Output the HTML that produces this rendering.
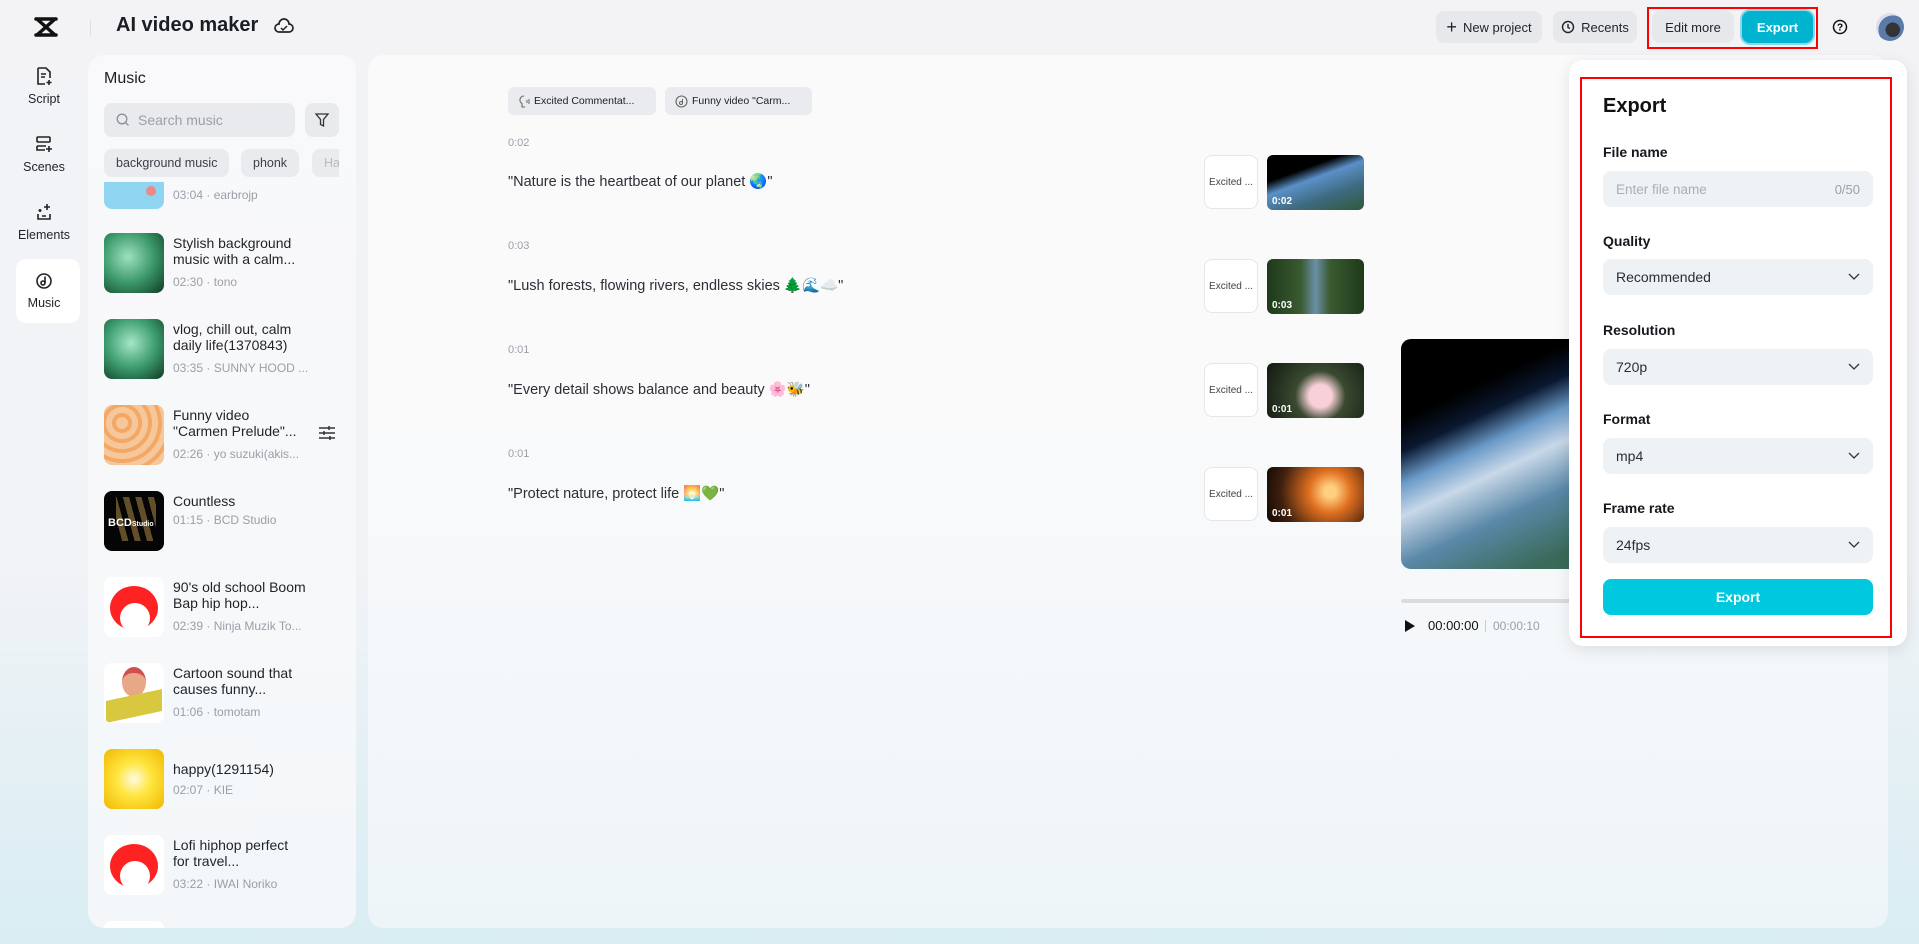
<!DOCTYPE html>
<html><head><meta charset="utf-8"><style>
*{box-sizing:border-box;margin:0;padding:0}
body{width:1919px;height:944px;overflow:hidden;position:relative;font-family:"Liberation Sans","Noto Sans CJK JP",sans-serif;color:#1a1d23;background:linear-gradient(180deg,#f3f3f6 0%,#f1f3f6 60%,#d8edf3 100%)}
.abs{position:absolute}
.btn{position:absolute;top:11px;height:32px;border-radius:8px;background:#e6e8ec;font-size:13px;display:flex;align-items:center;justify-content:center;gap:6px;color:#1f2329}
.panel{position:absolute;border-radius:16px}
.nav{position:absolute;left:0;width:88px;text-align:center;font-size:12.5px;color:#1f2329}
.nav svg{display:block;margin:0 auto 6px}
.item{position:absolute;left:104px;height:60px;width:240px}
.item .th{position:absolute;left:0;top:0;width:60px;height:60px;border-radius:8px;overflow:hidden}
.item .t{position:absolute;left:69px;top:2px;font-size:14px;line-height:16px;color:#1f2329;width:134px}
.item .s{position:absolute;left:69px;font-size:12px;color:#9a9fa8;white-space:nowrap}
.tag{position:absolute;top:149px;height:28px;border-radius:8px;background:#e9ebef;font-size:12.5px;color:#3a3f47;display:flex;align-items:center;padding:0 12px}
.time{position:absolute;left:508px;font-size:11px;color:#9a9fa8}
.sent{position:absolute;left:508px;font-size:14.5px;color:#2b2f36}
.exc{position:absolute;left:1204px;width:54px;height:54px;border:1px solid #e4e6ea;border-radius:8px;background:#fff;font-size:10px;color:#444;display:flex;align-items:center;justify-content:center}
.vt{position:absolute;left:1267px;width:97px;height:55px;border-radius:6px;overflow:hidden;background:#000}
.vt span{position:absolute;left:5px;bottom:3px;color:#fff;font-size:10px;font-weight:bold}
.lbl{position:absolute;left:1603px;font-size:14px;font-weight:bold;color:#16181d}
.sel{position:absolute;left:1603px;width:270px;height:36px;border-radius:8px;background:#eff2f5;font-size:14px;color:#2a2e35;display:flex;align-items:center;padding:0 13px;justify-content:space-between}
</style></head><body>
<svg class="abs" style="left:34px;top:16px" width="24" height="22" viewBox="0 0 24 22"><path d="M2 3h20M2 19h20M3 3l18 16M21 3L3 19" fill="none" stroke="#111" stroke-width="3.5" stroke-linecap="round"/></svg>
<div class="abs" style="left:90px;top:20px;width:1px;height:16px;background:#ddd"></div>
<div class="abs" style="left:116px;top:14px;font-size:20px;font-weight:bold">AI video maker</div>
<svg class="abs" style="left:273px;top:15px" width="22" height="22" viewBox="0 0 22 22"><path d="M6 17a4 4 0 0 1 0-8 5 5 0 0 1 10 0 4 4 0 0 1 0 8z" fill="none" stroke="#222" stroke-width="1.7"/><path d="M8 13l2 2 4-4" fill="none" stroke="#222" stroke-width="1.5"/></svg>
<div class="btn" style="left:1436px;width:106px"><span style="font-size:18px">+</span>New project</div>
<div class="btn" style="left:1553px;width:84px"><svg width="14" height="14" viewBox="0 0 14 14"><circle cx="7" cy="7" r="5.5" fill="none" stroke="#222" stroke-width="1.4"/><path d="M7 4v3.5l2 1" fill="none" stroke="#222" stroke-width="1.4"/></svg>Recents</div>
<div class="abs" style="left:1647px;top:7px;width:171px;height:42px;border:2px solid #f00"></div>
<div class="btn" style="left:1652px;width:82px">Edit more</div>
<div class="btn" style="left:1742px;width:71px;background:#00b4d0;color:#fff;font-weight:bold;box-shadow:0 0 0 2px #8fd6ea">Export</div>
<svg class="abs" style="left:1832px;top:19px" width="16" height="16" viewBox="0 0 16 16"><circle cx="8" cy="8" r="6.5" fill="none" stroke="#111" stroke-width="1.5"/><text x="8" y="11.5" font-size="10" font-weight="bold" text-anchor="middle" font-family="Liberation Sans">?</text></svg>
<div class="abs" style="left:1876px;top:13px;width:28px;height:28px;border-radius:50%;background:radial-gradient(circle at 60% 60%,#333 0 30%,#5a7aa8 31% 60%,#dde 61%)"></div>
<div class="nav" style="top:66px"><svg width="18" height="20" viewBox="0 0 18 20"><path d="M3 2h8l4 4v6M3 2v16h7" fill="none" stroke="#222" stroke-width="1.6"/><path d="M6 8h5M6 11h4M14 14v5M11.5 16.5h5" stroke="#222" stroke-width="1.6"/></svg>Script</div>
<div class="nav" style="top:134px"><svg width="18" height="20" viewBox="0 0 18 20"><rect x="2" y="3" width="13" height="5" rx="1" fill="none" stroke="#222" stroke-width="1.6"/><path d="M2 12h9M2 12v4h8M14 12v6M11 15h6" fill="none" stroke="#222" stroke-width="1.6"/></svg>Scenes</div>
<div class="nav" style="top:202px"><svg width="18" height="20" viewBox="0 0 18 20"><path d="M3 12v5h12v-5M7 14h4M12 2v6M9 5h6M5 7v3M3.5 8.5h3" fill="none" stroke="#222" stroke-width="1.6"/></svg>Elements</div>
<div class="abs" style="left:16px;top:259px;width:64px;height:64px;border-radius:10px;background:#fff"></div>
<div class="nav" style="top:270px"><svg width="18" height="20" viewBox="0 0 18 20"><circle cx="9" cy="11" r="7" fill="none" stroke="#222" stroke-width="1.6"/><circle cx="8" cy="13" r="2" fill="none" stroke="#222" stroke-width="1.6"/><path d="M10 13V6.5" stroke="#222" stroke-width="1.6"/></svg>Music</div>
<div class="panel" style="left:88px;top:55px;width:268px;height:873px;background:linear-gradient(180deg,#f9f9fb,#f4f7f9);overflow:hidden"></div>
<div class="abs" style="left:104px;top:70px;font-size:16px;font-weight:500">Music</div>
<div class="abs" style="left:104px;top:103px;width:191px;height:34px;border-radius:8px;background:#e8eaee;font-size:14px;color:#9aa0a8;display:flex;align-items:center;padding-left:12px;gap:8px"><svg width="14" height="14" viewBox="0 0 14 14"><circle cx="6" cy="6" r="4.8" fill="none" stroke="#8a9099" stroke-width="1.3"/><path d="M9.5 9.5l3 3" stroke="#8a9099" stroke-width="1.3"/></svg>Search music</div>
<div class="abs" style="left:305px;top:103px;width:34px;height:34px;border-radius:8px;background:#e8eaee"><svg style="margin:9px" width="16" height="16" viewBox="0 0 16 16"><path d="M2 2h12l-4.5 5.5V14l-3-1.5V7.5z" fill="none" stroke="#333" stroke-width="1.3"/></svg></div>
<div class="tag" style="left:104px">background music</div>
<div class="tag" style="left:241px">phonk</div>
<div class="abs" style="left:312px;top:149px;width:27px;height:28px;overflow:hidden"><div class="tag" style="left:0;top:0;color:#bbb">Ha</div></div>
<div class="abs" style="left:88px;top:182px;width:268px;height:746px;overflow:hidden;border-radius:0 0 16px 16px">
 <div class="abs" style="left:16px;top:-33px;width:60px;height:60px;border-radius:8px;background:#8fd4f0"></div>
 <div class="abs" style="left:58px;top:4px;width:10px;height:10px;border-radius:50%;background:#e88"></div>
 <div class="abs" style="left:85px;top:6px;font-size:12px;color:#9a9fa8">03:04 · earbrojp</div>
</div>
<div class="item" style="top:233px"><div class="th" style="background:radial-gradient(circle at 40% 40%,#9fe0c0,#3c9a6a 50%,#0f3a25)"></div><div class="t">Stylish background music with a calm...</div><div class="s" style="top:42px">02:30 · tono</div></div>
<div class="item" style="top:319px"><div class="th" style="background:radial-gradient(circle at 45% 40%,#a6e6c8,#3e9e70 50%,#0f3a25)"></div><div class="t">vlog, chill out, calm daily life(1370843)</div><div class="s" style="top:42px">03:35 · SUNNY HOOD ...</div></div>
<div class="item" style="top:405px"><div class="th" style="background:repeating-radial-gradient(circle at 30% 30%,#f6c79a 0 6px,#f3a866 6px 10px)"></div><div class="t">Funny video "Carmen Prelude"...</div><div class="s" style="top:42px">02:26 · yo suzuki(akis...</div><svg style="position:absolute;left:214px;top:20px" width="18" height="16" viewBox="0 0 18 16"><path d="M1 3h16M1 8h16M1 13h16" stroke="#333" stroke-width="1.5"/><path d="M11 1v4M6 6v4M12 11v4" stroke="#333" stroke-width="1.5"/></svg></div>
<div class="item" style="top:491px"><div class="th" style="background:#050505"><div style="position:absolute;left:12px;top:6px;width:40px;height:44px;background:repeating-linear-gradient(75deg,transparent 0 6px,#7a6030 6px 12px);opacity:.8"></div><div style="position:absolute;left:4px;top:26px;color:#fff;font-size:11px;font-weight:bold">BCD<span style="font-size:7px">Studio</span></div></div><div class="t">Countless</div><div class="s" style="top:22px">01:15 · BCD Studio</div></div>
<div class="item" style="top:577px"><div class="th" style="background:#fff"><div style="position:absolute;left:6px;top:9px;width:48px;height:44px;border-radius:50%;background:#f22"></div><div style="position:absolute;left:16px;top:26px;width:30px;height:30px;border-radius:50%;background:#fff"></div></div><div class="t">90's old school Boom Bap hip hop...</div><div class="s" style="top:42px">02:39 · Ninja Muzik To...</div></div>
<div class="item" style="top:663px"><div class="th" style="background:#fff"><div style="position:absolute;left:18px;top:4px;width:24px;height:30px;border-radius:50%;background:#e8a888;border-top:6px solid #d05050"></div><div style="position:absolute;left:2px;top:32px;width:56px;height:22px;background:#d8c840;transform:skewY(-12deg)"></div></div><div class="t">Cartoon sound that causes funny...</div><div class="s" style="top:42px">01:06 · tomotam</div></div>
<div class="item" style="top:749px"><div class="th" style="background:radial-gradient(circle,#fffbe0 0,#ffe640 40%,#f0b800 100%)"></div><div class="t" style="top:12px">happy(1291154)</div><div class="s" style="top:34px">02:07 · KIE</div></div>
<div class="item" style="top:835px"><div class="th" style="background:#fff"><div style="position:absolute;left:6px;top:9px;width:48px;height:44px;border-radius:50%;background:#f22"></div><div style="position:absolute;left:16px;top:26px;width:30px;height:30px;border-radius:50%;background:#fff"></div></div><div class="t">Lofi hiphop perfect for travel...</div><div class="s" style="top:42px">03:22 · IWAI Noriko</div></div>
<div class="abs" style="left:104px;top:921px;width:60px;height:7px;background:#fff;border-radius:8px 8px 0 0"></div>
<div class="panel" style="left:368px;top:55px;width:1520px;height:873px;background:linear-gradient(180deg,#fafafb 40%,#eef5f8 100%)"></div>
<div class="abs" style="left:508px;top:87px;width:148px;height:28px;border-radius:6px;background:#e9ebef;font-size:10.5px;font-weight:500;display:flex;align-items:center;padding-left:10px;gap:4px"><svg width="12" height="13" viewBox="0 0 12 13"><path d="M6 1a4 4 0 0 0-2 7.5V12h3" fill="none" stroke="#666" stroke-width="1.1"/><path d="M9 5v3M11 4v5" stroke="#666"/></svg>Excited Commentat...</div>
<div class="abs" style="left:665px;top:87px;width:147px;height:28px;border-radius:6px;background:#e9ebef;font-size:10.5px;font-weight:500;display:flex;align-items:center;padding-left:10px;gap:4px"><svg width="13" height="13" viewBox="0 0 13 13"><circle cx="6.5" cy="6.5" r="5.5" fill="none" stroke="#666" stroke-width="1.1"/><circle cx="6" cy="8" r="1.5" fill="none" stroke="#666"/><path d="M7.5 8V4" stroke="#666"/></svg>Funny video "Carm...</div>
<div class="time" style="top:137px">0:02</div><div class="sent" style="top:173px">"Nature is the heartbeat of our planet 🌏"</div>
<div class="time" style="top:240px">0:03</div><div class="sent" style="top:277px">"Lush forests, flowing rivers, endless skies 🌲🌊☁️"</div>
<div class="time" style="top:344px">0:01</div><div class="sent" style="top:381px">"Every detail shows balance and beauty 🌸🐝"</div>
<div class="time" style="top:448px">0:01</div><div class="sent" style="top:485px">"Protect nature, protect life 🌅💚"</div>
<div class="exc" style="top:155px">Excited ...</div><div class="vt" style="top:155px;background:linear-gradient(160deg,#000 30%,#5a90c8 45%,#3e6a80 70%,#2f5a3a)"><span>0:02</span></div>
<div class="exc" style="top:259px">Excited ...</div><div class="vt" style="top:259px;background:linear-gradient(90deg,#1e3a1a,#3a5a30 35%,#6a90a8 50%,#3a5a30 65%,#1e3a1a)"><span>0:03</span></div>
<div class="exc" style="top:363px">Excited ...</div><div class="vt" style="top:363px;background:radial-gradient(circle at 55% 60%,#f8d0d8 0 18%,#3a4a30 40%,#101810)"><span>0:01</span></div>
<div class="exc" style="top:467px">Excited ...</div><div class="vt" style="top:467px;background:radial-gradient(circle at 65% 45%,#ffd080 0 8%,#e07020 30%,#402010 70%,#100800)"><span>0:01</span></div>
<div class="abs" style="left:1401px;top:339px;width:200px;height:230px;border-radius:10px;background:linear-gradient(155deg,#000 25%,#0a1830 35%,#6a9ac8 45%,#c8d8e8 55%,#5a88a8 70%,#3a6a58 90%)"></div>
<div class="abs" style="left:1401px;top:599px;width:200px;height:4px;border-radius:2px;background:#dcdcde"></div>
<svg class="abs" style="left:1404px;top:619px" width="12" height="14" viewBox="0 0 12 14"><path d="M1 1l10 6-10 6z" fill="#111"/></svg>
<div class="abs" style="left:1428px;top:618px;font-size:13px;color:#111">00:00:00</div>
<div class="abs" style="left:1485px;top:620px;width:1px;height:12px;background:#ccc"></div>
<div class="abs" style="left:1493px;top:619px;font-size:12px;color:#9aa0a8">00:00:10</div>
<div class="abs" style="left:1569px;top:60px;width:338px;height:586px;border-radius:14px;background:#fff;box-shadow:0 4px 16px rgba(0,0,0,.1)"></div>
<div class="abs" style="left:1580px;top:77px;width:312px;height:561px;border:2px solid #f00"></div>
<div class="abs" style="left:1603px;top:95px;font-size:20px;font-weight:bold;color:#111">Export</div>
<div class="lbl" style="top:144px">File name</div>
<div class="sel" style="top:171px;color:#a8afb8;font-size:13.5px">Enter file name<span style="color:#9aa0a8;font-size:13px">0/50</span></div>
<div class="lbl" style="top:233px">Quality</div>
<div class="sel" style="top:259px">Recommended<svg width="12" height="8" viewBox="0 0 12 8"><path d="M1 1l5 5 5-5" fill="none" stroke="#333" stroke-width="1.3"/></svg></div>
<div class="lbl" style="top:322px">Resolution</div>
<div class="sel" style="top:349px">720p<svg width="12" height="8" viewBox="0 0 12 8"><path d="M1 1l5 5 5-5" fill="none" stroke="#333" stroke-width="1.3"/></svg></div>
<div class="lbl" style="top:411px">Format</div>
<div class="sel" style="top:438px">mp4<svg width="12" height="8" viewBox="0 0 12 8"><path d="M1 1l5 5 5-5" fill="none" stroke="#333" stroke-width="1.3"/></svg></div>
<div class="lbl" style="top:500px">Frame rate</div>
<div class="sel" style="top:527px">24fps<svg width="12" height="8" viewBox="0 0 12 8"><path d="M1 1l5 5 5-5" fill="none" stroke="#333" stroke-width="1.3"/></svg></div>
<div class="abs" style="left:1603px;top:579px;width:270px;height:36px;border-radius:8px;background:#00c8de;color:#fff;font-size:14px;font-weight:bold;display:flex;align-items:center;justify-content:center">Export</div>
</body></html>
